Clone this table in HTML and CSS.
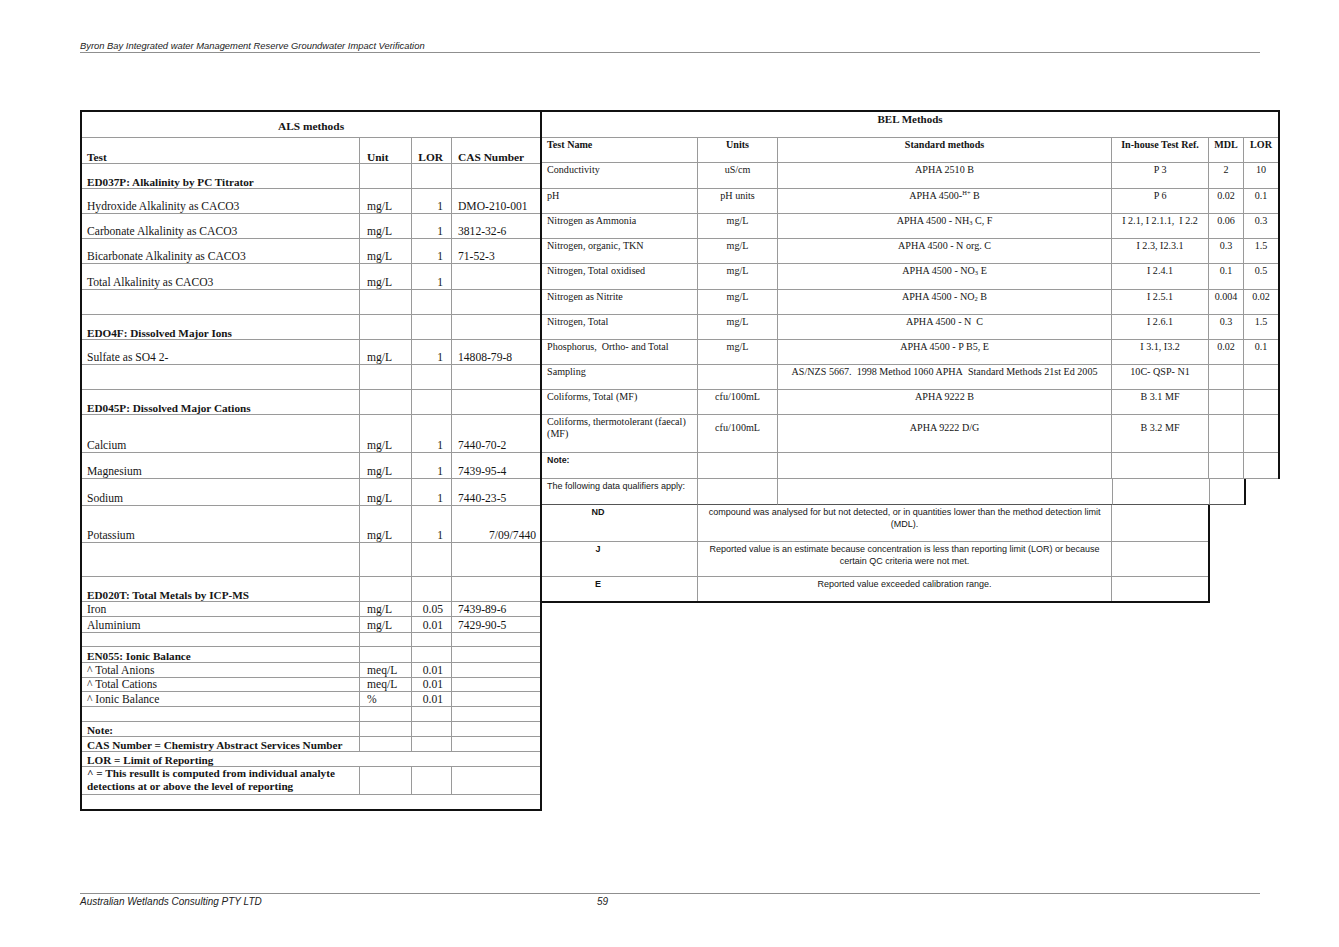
FILE: index.html
```html
<!DOCTYPE html>
<html lang="en">
<head>
<meta charset="utf-8">
<title>Byron Bay Integrated water Management Reserve Groundwater Impact Verification</title>
<link rel="stylesheet" href="styles.css">
</head>
<body>
<header class="page-head">Byron Bay Integrated water Management Reserve Groundwater Impact Verification</header>

<main class="sheets">
  <table class="als">
    <colgroup><col class="c-test"><col class="c-unit"><col class="c-lor"><col class="c-cas"></colgroup>
    <tbody>
      <tr class="h26"><td colspan="4" class="title">ALS methods</td></tr>
      <tr class="h26 hd"><td>Test</td><td class="u">Unit</td><td class="n">LOR</td><td class="c">CAS Number</td></tr>
      <tr class="h25"><td class="b">ED037P: Alkalinity by PC Titrator</td><td></td><td></td><td></td></tr>
      <tr class="h25"><td>Hydroxide Alkalinity as CACO3</td><td class="u">mg/L</td><td class="n">1</td><td class="c">DMO-210-001</td></tr>
      <tr class="h25"><td>Carbonate Alkalinity as CACO3</td><td class="u">mg/L</td><td class="n">1</td><td class="c">3812-32-6</td></tr>
      <tr class="h25"><td>Bicarbonate Alkalinity as CACO3</td><td class="u">mg/L</td><td class="n">1</td><td class="c">71-52-3</td></tr>
      <tr class="h26"><td>Total Alkalinity as CACO3</td><td class="u">mg/L</td><td class="n">1</td><td class="c"></td></tr>
      <tr class="h25"><td></td><td></td><td></td><td></td></tr>
      <tr class="h25"><td class="b">EDO4F: Dissolved Major Ions</td><td></td><td></td><td></td></tr>
      <tr class="h25"><td>Sulfate as SO4 2-</td><td class="u">mg/L</td><td class="n">1</td><td class="c">14808-79-8</td></tr>
      <tr class="h25"><td></td><td></td><td></td><td></td></tr>
      <tr class="h25"><td class="b">ED045P: Dissolved Major Cations</td><td></td><td></td><td></td></tr>
      <tr class="h38"><td>Calcium</td><td class="u">mg/L</td><td class="n">1</td><td class="c">7440-70-2</td></tr>
      <tr class="h26"><td>Magnesium</td><td class="u">mg/L</td><td class="n">1</td><td class="c">7439-95-4</td></tr>
      <tr class="h27"><td>Sodium</td><td class="u">mg/L</td><td class="n">1</td><td class="c">7440-23-5</td></tr>
      <tr class="h37"><td>Potassium</td><td class="u">mg/L</td><td class="n">1</td><td class="c r">7/09/7440</td></tr>
      <tr class="h34"><td></td><td></td><td></td><td></td></tr>
      <tr class="h25"><td class="b">ED020T: Total Metals by ICP-MS</td><td></td><td></td><td></td></tr>
      <tr class="h15"><td>Iron</td><td class="u">mg/L</td><td class="n">0.05</td><td class="c">7439-89-6</td></tr>
      <tr class="h16"><td>Aluminium</td><td class="u">mg/L</td><td class="n">0.01</td><td class="c">7429-90-5</td></tr>
      <tr class="h14"><td></td><td></td><td></td><td></td></tr>
      <tr class="h16"><td class="b">EN055: Ionic Balance</td><td></td><td></td><td></td></tr>
      <tr class="h15"><td>^ Total Anions</td><td class="u">meq/L</td><td class="n">0.01</td><td class="c"></td></tr>
      <tr class="h14"><td>^ Total Cations</td><td class="u">meq/L</td><td class="n">0.01</td><td class="c"></td></tr>
      <tr class="h15"><td>^ Ionic Balance</td><td class="u">%</td><td class="n">0.01</td><td class="c"></td></tr>
      <tr class="h15"><td></td><td></td><td></td><td></td></tr>
      <tr class="h15"><td class="b">Note:</td><td></td><td></td><td></td></tr>
      <tr class="h15"><td class="b">CAS Number = Chemistry Abstract Services Number</td><td></td><td></td><td></td></tr>
      <tr class="h15"><td colspan="4" class="b">LOR = Limit of Reporting</td></tr>
      <tr class="h27"><td class="b two">^ = This resullt is computed from individual analyte<br>detections at or above the level of reporting</td><td></td><td></td><td></td></tr>
      <tr class="h14"><td colspan="4"></td></tr>
    </tbody>
  </table>

  <div class="bel-side">
    <table class="bel">
      <colgroup><col class="b-name"><col class="b-unit"><col class="b-std"><col class="b-ref"><col class="b-mdl"><col class="b-lor"></colgroup>
      <tbody>
        <tr class="h26"><td colspan="6" class="btitle">BEL Methods</td></tr>
        <tr class="h25 hd"><td class="l">Test Name</td><td>Units</td><td>Standard methods</td><td>In-house Test Ref.</td><td>MDL</td><td>LOR</td></tr>
        <tr class="h26"><td class="l">Conductivity</td><td>uS/cm</td><td>APHA 2510 B</td><td>P 3</td><td>2</td><td>10</td></tr>
        <tr class="h25"><td class="l">pH</td><td>pH units</td><td>APHA 4500-<sup>H+</sup> B</td><td>P 6</td><td>0.02</td><td>0.1</td></tr>
        <tr class="h25"><td class="l">Nitrogen as Ammonia</td><td>mg/L</td><td>APHA 4500 - NH<sub>3</sub> C, F</td><td>I 2.1, I 2.1.1,&nbsp; I 2.2</td><td>0.06</td><td>0.3</td></tr>
        <tr class="h25"><td class="l">Nitrogen, organic, TKN</td><td>mg/L</td><td>APHA 4500 - N org. C</td><td>I 2.3, I2.3.1</td><td>0.3</td><td>1.5</td></tr>
        <tr class="h26"><td class="l">Nitrogen, Total oxidised</td><td>mg/L</td><td>APHA 4500 - NO<sub>3</sub> E</td><td>I 2.4.1</td><td>0.1</td><td>0.5</td></tr>
        <tr class="h25"><td class="l">Nitrogen as Nitrite</td><td>mg/L</td><td>APHA 4500 - NO<sub>2</sub> B</td><td>I 2.5.1</td><td>0.004</td><td>0.02</td></tr>
        <tr class="h25"><td class="l">Nitrogen, Total</td><td>mg/L</td><td>APHA 4500 - N&nbsp; C</td><td>I 2.6.1</td><td>0.3</td><td>1.5</td></tr>
        <tr class="h25"><td class="l">Phosphorus,&nbsp; Ortho- and Total</td><td>mg/L</td><td>APHA 4500 - P B5, E</td><td>I 3.1, I3.2</td><td>0.02</td><td>0.1</td></tr>
        <tr class="h25"><td class="l">Sampling</td><td></td><td>AS/NZS 5667.&nbsp; 1998 Method 1060 APHA&nbsp; Standard Methods 21st Ed 2005</td><td>10C- QSP- N1</td><td></td><td></td></tr>
        <tr class="h25"><td class="l">Coliforms, Total (MF)</td><td>cfu/100mL</td><td>APHA 9222 B</td><td>B 3.1 MF</td><td></td><td></td></tr>
        <tr class="h38 mid"><td class="l">Coliforms, thermotolerant (faecal)<br>(MF)</td><td>cfu/100mL</td><td>APHA 9222 D/G</td><td>B 3.2 MF</td><td></td><td></td></tr>
        <tr class="h26"><td class="l sans b">Note:</td><td></td><td></td><td></td><td></td><td></td></tr>
      </tbody>
    </table>

    <table class="qual">
      <colgroup><col class="b-name"><col class="b-unit"><col class="b-std"><col class="b-ref"><col class="q-mdl"></colgroup>
      <tbody>
        <tr class="h26"><td class="l sans">The following data qualifiers apply:</td><td></td><td></td><td></td><td></td></tr>
      </tbody>
    </table>

    <table class="nd">
      <colgroup><col class="b-name"><col class="n-desc"><col class="n-ref"></colgroup>
      <tbody>
        <tr class="h37"><td class="code">ND</td><td class="desc">compound was analysed for but not detected, or in quantities lower than the method detection limit<br>(MDL).</td><td></td></tr>
        <tr class="h35"><td class="code">J</td><td class="desc">Reported value is an estimate because concentration is less than reporting limit (LOR) or because<br>certain QC criteria were not met.</td><td></td></tr>
        <tr class="h24"><td class="code">E</td><td class="desc">Reported value exceeded calibration range.</td><td></td></tr>
      </tbody>
    </table>
  </div>
</main>

<footer class="page-foot"><span>Australian Wetlands Consulting PTY LTD</span><span>59</span></footer>
</body>
</html>
```

FILE: styles.css
```css
* { box-sizing: border-box; }

html, body { background: #fff; }

body {
  margin: 0;
  min-height: 947px;
  display: flex;
  flex-direction: column;
  color: #151515;
  font-family: "Liberation Serif", "Times New Roman", serif;
}

.page-head {
  margin: 0 79px 0 80px;
  padding-top: 40px;
  border-bottom: 1px solid #8f8f8f;
  font: italic 9.4px/12px "Liberation Sans", Arial, sans-serif;
  color: #222;
}

.sheets {
  display: flex;
  align-items: flex-start;
  margin: 57px 0 0 80px;
}

table {
  border-collapse: separate;
  border-spacing: 0;
  table-layout: fixed;
}

td {
  padding: 0;
  white-space: nowrap;
  overflow: hidden;
}

.h14 { height: 14px; }
.h15 { height: 15px; }
.h16 { height: 16px; }
.h24 { height: 24px; }
.h25 { height: 25px; }
.h26 { height: 26px; }
.h27 { height: 27px; }
.h34 { height: 34px; }
.h35 { height: 35px; }
.h37 { height: 37px; }
.h38 { height: 38px; }

/* ---------- ALS table ---------- */
.als {
  width: 462px;
  border: 2px solid #111;
}
.als .c-test { width: 278px; }
.als .c-unit { width: 52px; }
.als .c-lor { width: 40px; }
.als .c-cas { width: 88px; }

.als td {
  border-right: 1px solid #9a9a9a;
  border-bottom: 1px solid #9a9a9a;
  padding: 0 5px 0 5px;
  vertical-align: bottom;
  font-size: 11.6px;
  line-height: 12px;
}
.als td:last-child { border-right: none; }
.als tr:last-child td { border-bottom: none; }
.als td.two { line-height: 13px; padding-bottom: 1px; }

.als .title {
  text-align: center;
  vertical-align: middle;
  font-weight: bold;
  font-size: 11.4px;
  padding-top: 3px;
}
.als .hd td { font-weight: bold; font-size: 11.4px; }
.als .b { font-weight: bold; font-size: 11.2px; }
.als .u { padding-left: 7px; }
.als .n { text-align: right; padding-right: 8px; }
.als .c { padding-left: 6px; }
.als .c.r { text-align: right; padding-right: 4px; }

/* ---------- BEL tables ---------- */
.bel-side {
  display: flex;
  flex-direction: column;
  align-items: flex-start;
}

.b-name { width: 156px; }
.b-unit { width: 80px; }
.b-std { width: 334px; }
.b-ref { width: 97px; }
.b-mdl { width: 35px; }
.b-lor { width: 34px; }
.q-mdl { width: 34px; }
.n-desc { width: 414px; }
.n-ref { width: 96px; }

.bel {
  width: 738px;
  border-top: 2px solid #111;
  border-right: 2px solid #111;
}
.qual {
  width: 704px;
  border-right: 2px solid #111;
}
.nd {
  width: 668px;
  border-right: 2px solid #111;
  border-bottom: 2px solid #111;
}

.bel td, .qual td, .nd td {
  border-right: 1px solid #9a9a9a;
  border-bottom: 1px solid #9a9a9a;
  padding: 1px 3px 0;
  vertical-align: top;
  text-align: center;
  font-size: 10.1px;
  line-height: 12px;
}
.bel td:last-child, .qual td:last-child, .nd td:last-child { border-right: none; }
.nd tr:last-child td { border-bottom: none; }
.qual td { border-bottom-color: #555; }

.bel .btitle {
  font-weight: bold;
  font-size: 11px;
  line-height: 13px;
}
.bel .hd td { font-weight: bold; }
.bel td.l, .qual td.l { text-align: left; padding-left: 5px; }
.bel .mid td + td { padding-top: 7px; }

sup, sub { font-size: 6.5px; line-height: 0; }
sup { vertical-align: 4px; }
sub { vertical-align: -1px; }

.sans {
  font-family: "Liberation Sans", Arial, sans-serif;
}
.qual td.sans { font-size: 9px; }
.bel td.sans { font-size: 8.8px; }
.bel .b { font-weight: bold; }

.nd td {
  font-family: "Liberation Sans", Arial, sans-serif;
  font-size: 9px;
}
.nd .code {
  font-weight: bold;
  padding-right: 46px;
}

/* ---------- footer ---------- */
.page-foot {
  margin: auto 79px 0 80px;
  border-top: 1px solid #8f8f8f;
  padding: 2px 0 39px;
  display: grid;
  grid-template-columns: 517px auto;
  font: italic 10px/12px "Liberation Sans", Arial, sans-serif;
  color: #222;
}
```
